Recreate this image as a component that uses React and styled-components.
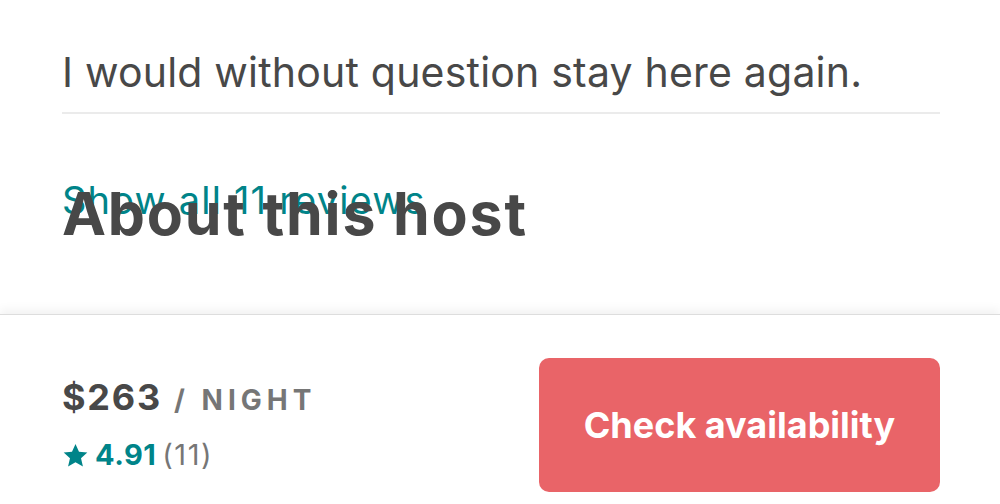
import React from 'react';
import styled, { createGlobalStyle } from 'styled-components';

const GlobalStyle = createGlobalStyle`
  html, body {
    margin: 0;
    padding: 0;
    background: #ffffff;
  }
  body {
    font-family: 'Inter', 'Noto Sans', sans-serif;
    color: #484848;
  }
`;

const Page = styled.div`
  height: 504px;
  display: flex;
  flex-direction: column;
  overflow: hidden;
`;

const Content = styled.section`
  flex: 1;
  padding: 46px 60px 0 62px;
`;

const ReviewText = styled.p`
  margin: 0;
  font-size: 41px;
  line-height: 52px;
  letter-spacing: 0.2px;
  color: #484848;
`;

const Divider = styled.hr`
  border: 0;
  border-top: 2px solid #ebebeb;
  margin: 14px 0 0;
`;

const ShowAll = styled.a`
  display: block;
  margin-top: 66px;
  font-size: 38px;
  line-height: 40px;
  letter-spacing: 1.2px;
  color: #008489;
  text-decoration: none;
`;

const Heading = styled.h2`
  margin: -38px 0 0;
  font-size: 59px;
  line-height: 64px;
  font-weight: 700;
  color: #484848;
  letter-spacing: 1.8px;
`;

const Footer = styled.footer`
  height: 189px;
  flex-shrink: 0;
  display: flex;
  justify-content: space-between;
  padding: 0 60px 0 62px;
  border-top: 1px solid #dddddd;
  box-shadow: 0 -4px 10px rgba(0, 0, 0, 0.06);
  background: #ffffff;
`;

const PriceBlock = styled.div`
  display: flex;
  flex-direction: column;
  gap: 15px;
  margin-top: 60px;
`;

const PriceLine = styled.div`
  display: flex;
  align-items: baseline;
  gap: 12px;
  line-height: 44px;
`;

const Price = styled.span`
  font-size: 36px;
  font-weight: 700;
  letter-spacing: 1.8px;
  color: #484848;
`;

const Unit = styled.span`
  font-size: 28px;
  font-weight: 700;
  letter-spacing: 5px;
  color: #767676;
`;

const RatingLine = styled.div`
  display: flex;
  align-items: center;
  gap: 6px;
  font-size: 29px;
  line-height: 36px;
`;

const Score = styled.span`
  font-weight: 700;
  letter-spacing: 0.5px;
  color: #008489;
`;

const Count = styled.span`
  letter-spacing: 1.5px;
  color: #767676;
`;

const CheckButton = styled.button`
  align-self: flex-end;
  margin-bottom: 12px;
  width: 401px;
  height: 134px;
  border: 0;
  border-radius: 10px;
  background: #e96468;
  color: #ffffff;
  font-family: inherit;
  font-size: 36px;
  font-weight: 700;
  cursor: pointer;
`;

const Star = () => (
  <svg width="27" height="27" viewBox="0 0 24 24" fill="#008489" aria-hidden="true">
    <path d="M12 1.8l3.1 6.9 7.4.7-5.6 5 1.7 7.4L12 17.9 5.4 21.8l1.7-7.4-5.6-5 7.4-.7z" />
  </svg>
);

export default function App() {
  return (
    <Page>
      <GlobalStyle />
      <Content>
        <ReviewText>I would without question stay here again.</ReviewText>
        <Divider />
        <ShowAll href="#">Show all 11 reviews</ShowAll>
        <Heading>About this host</Heading>
      </Content>
      <Footer>
        <PriceBlock>
          <PriceLine>
            <Price>$263</Price>
            <Unit>/ NIGHT</Unit>
          </PriceLine>
          <RatingLine>
            <Star />
            <Score>4.91</Score>
            <Count>(11)</Count>
          </RatingLine>
        </PriceBlock>
        <CheckButton>Check availability</CheckButton>
      </Footer>
    </Page>
  );
}
